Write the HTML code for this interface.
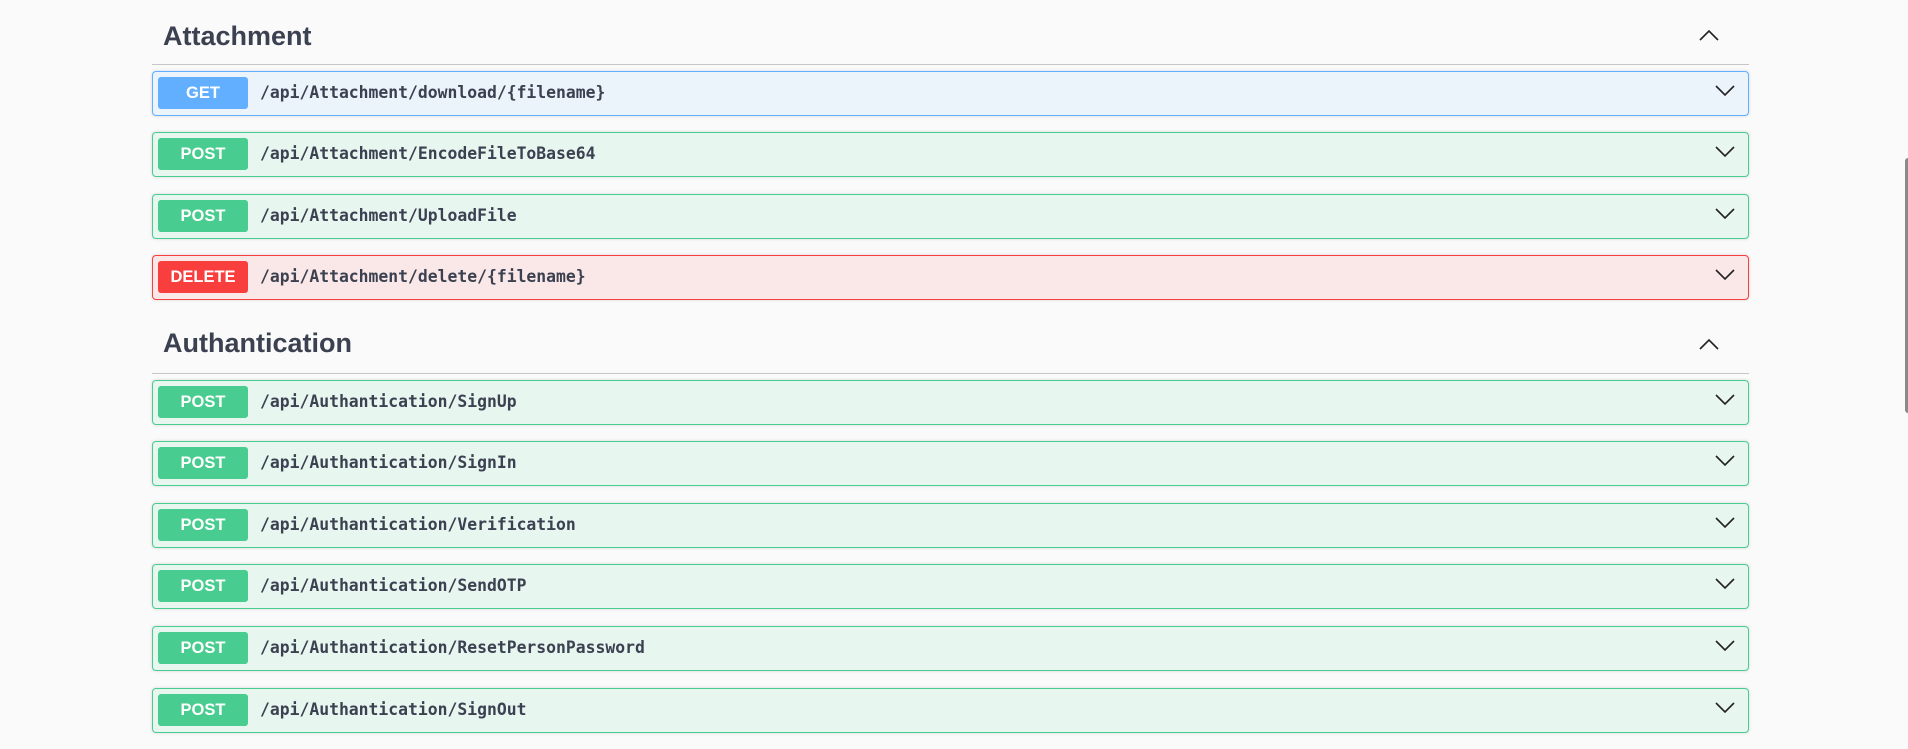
<!DOCTYPE html>
<html><head><style>
body{margin:0;width:1908px;height:749px;background:#fafafa;position:relative;overflow:hidden;font-family:"Liberation Sans",sans-serif}
.h{position:absolute;left:152px;width:1597px;height:56px;border-bottom:1px solid #c6c6c6}
.h span{position:absolute;left:11px;top:13px;font-size:27px;font-weight:bold;color:#3b4151}
.h svg{position:absolute;right:30px;top:21px}
.op{position:absolute;left:152px;width:1595px;height:43px;border:1px solid;border-radius:4px;box-shadow:0 0 3px rgba(0,0,0,.15)}
.b{position:absolute;left:5px;top:5px;width:90px;height:32px;border-radius:3px;color:#fff;font-weight:bold;font-size:16.5px;text-align:center;line-height:32px}
.p{position:absolute;left:107px;top:0;line-height:42px;font-family:"DejaVu Sans Mono","Liberation Mono",monospace;font-weight:bold;font-size:16.4px;color:#3b4151}
.op svg{position:absolute;right:13px;top:13px}
.g{background:#ebf3fb;border-color:#61affe}.g .b{background:#61affe}
.o{background:#e8f6f0;border-color:#49cc90}.o .b{background:#49cc90}
.d{background:#fae7e7;border-color:#f93e3e}.d .b{background:#f93e3e}
</style></head><body>
<div class="h" style="top:8px"><span>Attachment</span><svg width="20" height="12" viewBox="0 0 20 12"><path d="M1 11L10 2L19 11" fill="none" stroke="#222" stroke-width="1.6"/></svg></div>
<div class="op g" style="top:71px"><div class="b">GET</div><div class="p">/api/Attachment/download/{filename}</div><svg width="20" height="12" viewBox="0 0 20 12"><path d="M1 1L10 10L19 1" fill="none" stroke="#222" stroke-width="1.6"/></svg></div>
<div class="op o" style="top:132px"><div class="b">POST</div><div class="p">/api/Attachment/EncodeFileToBase64</div><svg width="20" height="12" viewBox="0 0 20 12"><path d="M1 1L10 10L19 1" fill="none" stroke="#222" stroke-width="1.6"/></svg></div>
<div class="op o" style="top:194px"><div class="b">POST</div><div class="p">/api/Attachment/UploadFile</div><svg width="20" height="12" viewBox="0 0 20 12"><path d="M1 1L10 10L19 1" fill="none" stroke="#222" stroke-width="1.6"/></svg></div>
<div class="op d" style="top:255px"><div class="b">DELETE</div><div class="p">/api/Attachment/delete/{filename}</div><svg width="20" height="12" viewBox="0 0 20 12"><path d="M1 1L10 10L19 1" fill="none" stroke="#222" stroke-width="1.6"/></svg></div>
<div class="h" style="top:317px"><span style="top:11px">Authantication</span><svg width="20" height="12" viewBox="0 0 20 12"><path d="M1 11L10 2L19 11" fill="none" stroke="#222" stroke-width="1.6"/></svg></div>
<div class="op o" style="top:380px"><div class="b">POST</div><div class="p">/api/Authantication/SignUp</div><svg width="20" height="12" viewBox="0 0 20 12"><path d="M1 1L10 10L19 1" fill="none" stroke="#222" stroke-width="1.6"/></svg></div>
<div class="op o" style="top:441px"><div class="b">POST</div><div class="p">/api/Authantication/SignIn</div><svg width="20" height="12" viewBox="0 0 20 12"><path d="M1 1L10 10L19 1" fill="none" stroke="#222" stroke-width="1.6"/></svg></div>
<div class="op o" style="top:503px"><div class="b">POST</div><div class="p">/api/Authantication/Verification</div><svg width="20" height="12" viewBox="0 0 20 12"><path d="M1 1L10 10L19 1" fill="none" stroke="#222" stroke-width="1.6"/></svg></div>
<div class="op o" style="top:564px"><div class="b">POST</div><div class="p">/api/Authantication/SendOTP</div><svg width="20" height="12" viewBox="0 0 20 12"><path d="M1 1L10 10L19 1" fill="none" stroke="#222" stroke-width="1.6"/></svg></div>
<div class="op o" style="top:626px"><div class="b">POST</div><div class="p">/api/Authantication/ResetPersonPassword</div><svg width="20" height="12" viewBox="0 0 20 12"><path d="M1 1L10 10L19 1" fill="none" stroke="#222" stroke-width="1.6"/></svg></div>
<div class="op o" style="top:688px"><div class="b">POST</div><div class="p">/api/Authantication/SignOut</div><svg width="20" height="12" viewBox="0 0 20 12"><path d="M1 1L10 10L19 1" fill="none" stroke="#222" stroke-width="1.6"/></svg></div>
<div style="position:absolute;left:1905px;top:158px;width:4px;height:255px;background:#8a8a8a;border-radius:3px 0 0 3px"></div>
</body></html>
